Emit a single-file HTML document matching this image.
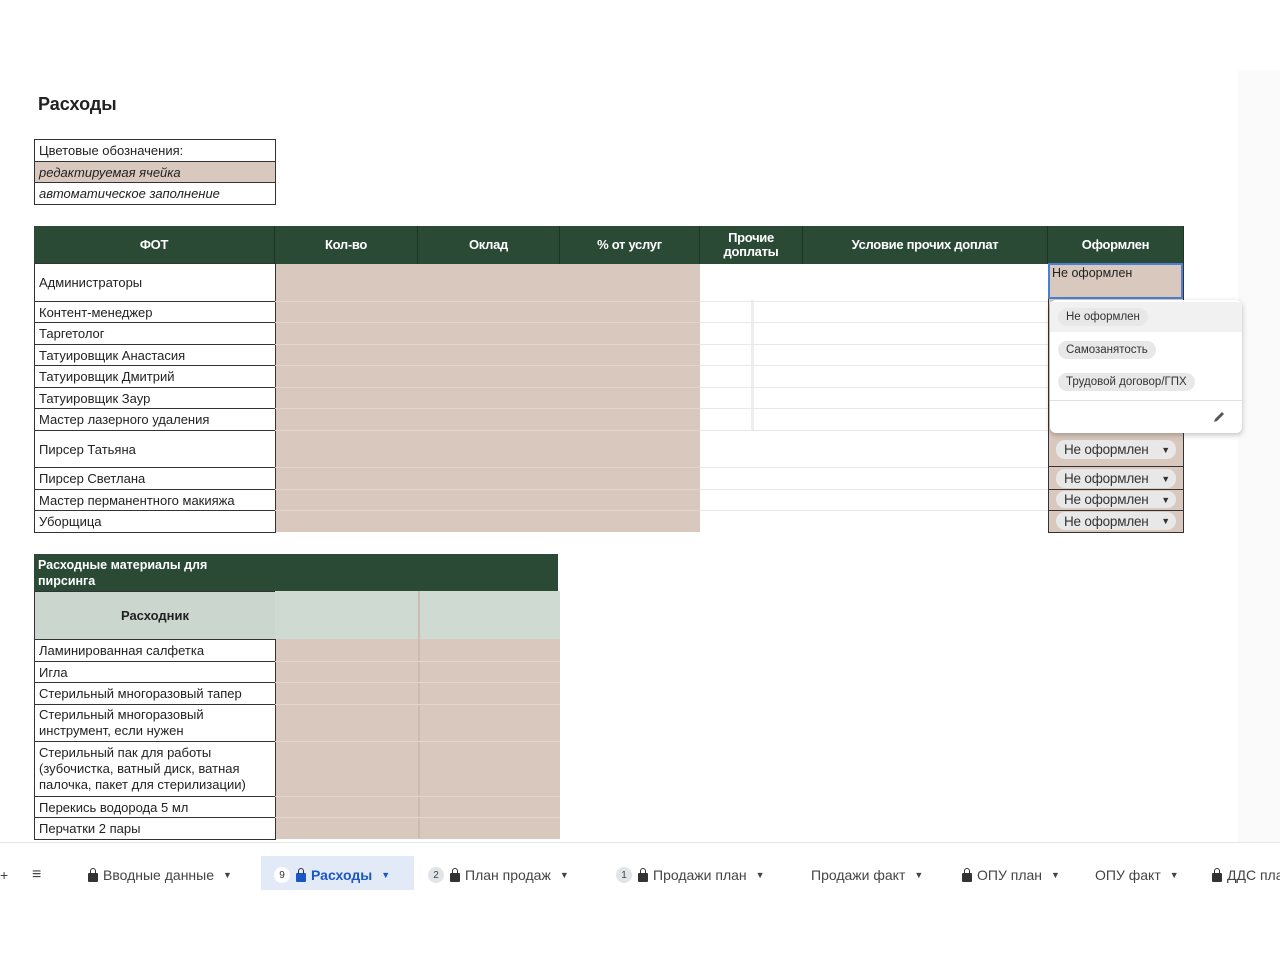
<!DOCTYPE html>
<html><head><meta charset="utf-8"><style>
*{box-sizing:border-box;margin:0;padding:0}
body{width:1280px;height:960px;background:#fff;position:relative;overflow:hidden;font-family:"Liberation Sans","DejaVu Sans",sans-serif;color:#222}
.a{position:absolute}
.c{position:absolute;border:1px solid #333;font-size:13px;padding-left:4px;display:flex;align-items:center;background:#fff;white-space:nowrap;overflow:hidden}
.h{position:absolute;background:#2a4a36;color:#fff;font-weight:bold;font-size:13px;display:flex;align-items:center;justify-content:center;text-align:center;line-height:14px;border-right:1px solid #1c3325;letter-spacing:-0.3px}
.bg{position:absolute;background:#d8c8bd}
.ln{position:absolute;height:1px;background:#e3d6cc}
.wln{position:absolute;height:1px;background:#e8e8e8}
.chip{position:absolute;background:#e8e8e8;border-radius:9px;font-size:12.5px;height:18px;display:flex;align-items:center;padding:0 8px;color:#333;white-space:nowrap}
.tab{position:absolute;top:862px;font-size:14px;color:#444;height:26px;display:flex;align-items:center;white-space:nowrap}
.lock{display:inline-block;width:10px;height:9px;background:#333;border-radius:1px;position:relative;margin:0 5px 0 0;top:2px}
.lock:before{content:"";position:absolute;left:2px;top:-5px;width:6px;height:6px;border:1.5px solid #333;border-bottom:none;border-radius:3px 3px 0 0;box-sizing:border-box}
.badge{display:inline-flex;width:16px;height:16px;border-radius:8px;background:#e1e4e8;font-size:10px;align-items:center;justify-content:center;margin-right:6px}
.tri{font-size:9px;margin-left:9px}
.sel{position:absolute;left:1056px;width:120px;background:#e8e8e8;border-radius:9px;font-size:13.5px;display:flex;align-items:center;padding:0 6px 0 8px;color:#333;white-space:nowrap;letter-spacing:-0.2px}
</style></head><body>
<div class="a" style="left:1238px;top:70px;width:42px;height:772px;background:#fafafa"></div>
<div class="a" style="left:38px;top:94px;font-size:18px;font-weight:bold">Расходы</div>

<div class="c" style="left:34px;top:139px;width:242px;height:23px">Цветовые обозначения:</div>
<div class="c" style="left:34px;top:161px;width:242px;height:22px;background:#d8c8bd;font-style:italic">редактируемая ячейка</div>
<div class="c" style="left:34px;top:182px;width:242px;height:23px;font-style:italic">автоматическое заполнение</div>

<div class="h" style="left:34px;top:226px;width:241px;height:38px">ФОТ</div>
<div class="h" style="left:275px;top:226px;width:143px;height:38px">Кол-во</div>
<div class="h" style="left:418px;top:226px;width:142px;height:38px">Оклад</div>
<div class="h" style="left:560px;top:226px;width:140px;height:38px">% от услуг</div>
<div class="h" style="left:700px;top:226px;width:103px;height:38px">Прочие<br>доплаты</div>
<div class="h" style="left:803px;top:226px;width:245px;height:38px">Условие прочих доплат</div>
<div class="h" style="left:1048px;top:226px;width:136px;height:38px">Оформлен</div>

<div class="bg" style="left:275px;top:264px;width:425px;height:268px"></div>
<div class="a" style="left:700px;top:264px;width:348px;height:268px;background:#fff"></div>
<div class="bg" style="left:1048px;top:264px;width:136px;height:268px;border-left:1px solid #333;border-right:1px solid #333"></div>
<div class="a" style="left:751px;top:300px;width:3px;height:130px;background:#eee"></div>

<div class="c" style="left:34px;top:263px;width:242px;height:39px">Администраторы</div>
<div class="c" style="left:34px;top:301px;width:242px;height:22px">Контент-менеджер</div>
<div class="c" style="left:34px;top:322px;width:242px;height:23px">Таргетолог</div>
<div class="c" style="left:34px;top:344px;width:242px;height:22px">Татуировщик Анастасия</div>
<div class="c" style="left:34px;top:365px;width:242px;height:23px">Татуировщик Дмитрий</div>
<div class="c" style="left:34px;top:387px;width:242px;height:22px">Татуировщик Заур</div>
<div class="c" style="left:34px;top:408px;width:242px;height:23px">Мастер лазерного удаления</div>
<div class="c" style="left:34px;top:430px;width:242px;height:38px">Пирсер Татьяна</div>
<div class="c" style="left:34px;top:467px;width:242px;height:23px">Пирсер Светлана</div>
<div class="c" style="left:34px;top:489px;width:242px;height:22px">Мастер перманентного макияжа</div>
<div class="c" style="left:34px;top:510px;width:242px;height:23px">Уборщица</div>

<div class="ln" style="left:275px;top:301px;width:425px"></div><div class="ln" style="left:275px;top:322px;width:425px"></div><div class="ln" style="left:275px;top:344px;width:425px"></div><div class="ln" style="left:275px;top:365px;width:425px"></div><div class="ln" style="left:275px;top:387px;width:425px"></div><div class="ln" style="left:275px;top:408px;width:425px"></div><div class="ln" style="left:275px;top:430px;width:425px"></div><div class="ln" style="left:275px;top:467px;width:425px"></div><div class="ln" style="left:275px;top:489px;width:425px"></div><div class="ln" style="left:275px;top:510px;width:425px"></div>
<div class="wln" style="left:700px;top:301px;width:348px"></div><div class="wln" style="left:700px;top:322px;width:348px"></div><div class="wln" style="left:700px;top:344px;width:348px"></div><div class="wln" style="left:700px;top:365px;width:348px"></div><div class="wln" style="left:700px;top:387px;width:348px"></div><div class="wln" style="left:700px;top:408px;width:348px"></div><div class="wln" style="left:700px;top:430px;width:348px"></div><div class="wln" style="left:700px;top:467px;width:348px"></div><div class="wln" style="left:700px;top:489px;width:348px"></div><div class="wln" style="left:700px;top:510px;width:348px"></div>
<div class="a" style="left:1048px;top:466px;width:136px;height:1px;background:#333"></div>
<div class="a" style="left:1048px;top:489px;width:136px;height:1px;background:#333"></div>
<div class="a" style="left:1048px;top:510px;width:136px;height:1px;background:#333"></div>
<div class="a" style="left:1048px;top:532px;width:136px;height:1px;background:#333"></div>

<div class="a" style="left:1048px;top:263px;width:135px;height:36px;border:2px solid #4a7fd4;background:#d8c8bd;font-size:12.5px;padding:1px 2px">Не оформлен</div>

<div class="sel" style="top:440px;height:19px">Не оформлен<span style="font-size:9px;margin-left:auto">▼</span></div>
<div class="sel" style="top:469px;height:19px">Не оформлен<span style="font-size:9px;margin-left:auto">▼</span></div>
<div class="sel" style="top:491px;height:17px">Не оформлен<span style="font-size:9px;margin-left:auto">▼</span></div>
<div class="sel" style="top:512px;height:18px">Не оформлен<span style="font-size:9px;margin-left:auto">▼</span></div>

<div class="a" style="left:1050px;top:300px;width:192px;height:133px;background:#fff;border-radius:6px;box-shadow:0 2px 6px rgba(0,0,0,.25)">
 <div class="a" style="left:0;top:2px;width:192px;height:30px;background:#f1f1f1"></div>
 <div class="chip" style="left:8px;top:8px;font-size:11.5px">Не оформлен</div>
 <div class="chip" style="left:8px;top:41px;font-size:11.5px">Самозанятость</div>
 <div class="chip" style="left:8px;top:73px;font-size:11.5px">Трудовой договор/ГПХ</div>
 <div class="a" style="left:0;top:100px;width:192px;height:1px;background:#e0e0e0"></div>
 <svg class="a" style="left:162px;top:110px" width="14" height="14" viewBox="0 0 14 14"><path d="M2 12 L3 9 L10 2 L12 4 L5 11 Z" fill="#555"/></svg>
</div>

<div class="a" style="left:34px;top:554px;width:524px;height:38px;background:#2a4a36"></div>
<div class="a" style="left:38px;top:557px;color:#fff;font-weight:bold;font-size:12.5px;line-height:16px">Расходные материалы для<br>пирсинга</div>
<div class="a" style="left:34px;top:591px;width:242px;height:49px;background:#cbd6cf;border:1px solid #333;display:flex;align-items:center;justify-content:center;font-weight:bold;font-size:13px">Расходник</div>
<div class="a" style="left:275px;top:591px;width:285px;height:48px;background:#cfdad3"></div>
<div class="bg" style="left:275px;top:639px;width:285px;height:200px"></div>
<div class="a" style="left:418px;top:591px;width:2px;height:248px;background:#ccbcb0"></div>
<div class="c" style="left:34px;top:639px;width:242px;height:23px">Ламинированная салфетка</div>
<div class="c" style="left:34px;top:661px;width:242px;height:22px">Игла</div>
<div class="c" style="left:34px;top:682px;width:242px;height:23px">Стерильный многоразовый тапер</div>
<div class="c" style="left:34px;top:704px;width:242px;height:38px;white-space:normal;line-height:16px;padding-right:40px">Стерильный многоразовый инструмент, если нужен</div>
<div class="c" style="left:34px;top:741px;width:242px;height:56px;white-space:normal;line-height:16px">Стерильный пак для работы (зубочистка, ватный диск, ватная палочка, пакет для стерилизации)</div>
<div class="c" style="left:34px;top:796px;width:242px;height:22px">Перекись водорода 5 мл</div>
<div class="c" style="left:34px;top:817px;width:242px;height:23px">Перчатки 2 пары</div>
<div class="ln" style="left:275px;top:661px;width:285px"></div><div class="ln" style="left:275px;top:682px;width:285px"></div><div class="ln" style="left:275px;top:704px;width:285px"></div><div class="ln" style="left:275px;top:741px;width:285px"></div><div class="ln" style="left:275px;top:796px;width:285px"></div><div class="ln" style="left:275px;top:817px;width:285px"></div>

<div class="a" style="left:0;top:842px;width:1280px;height:1px;background:#e5e5e5"></div>
<div class="a" style="left:0;top:843px;width:1280px;height:50px;background:#fff"></div>
<div class="tab" style="left:0px">+</div>
<div class="tab" style="left:32px;font-size:16px">≡</div>
<div class="tab" style="left:88px"><span class="lock"></span>Вводные данные<span class="tri">▼</span></div>
<div class="a" style="left:261px;top:856px;width:153px;height:34px;background:#e3eaf7"></div>
<div class="tab" style="left:274px;color:#1a56c4;font-weight:bold"><span class="badge" style="background:#fff;color:#333;font-weight:normal">9</span><span class="lock" style="background:#1a56c4"></span>Расходы<span class="tri">▼</span></div>
<div class="tab" style="left:428px"><span class="badge">2</span><span class="lock"></span>План продаж<span class="tri">▼</span></div>
<div class="tab" style="left:616px"><span class="badge">1</span><span class="lock"></span>Продажи план<span class="tri">▼</span></div>
<div class="tab" style="left:811px">Продажи факт<span class="tri">▼</span></div>
<div class="tab" style="left:962px"><span class="lock"></span>ОПУ план<span class="tri">▼</span></div>
<div class="tab" style="left:1095px">ОПУ факт<span class="tri">▼</span></div>
<div class="tab" style="left:1212px"><span class="lock"></span>ДДС план</div>
</body></html>
